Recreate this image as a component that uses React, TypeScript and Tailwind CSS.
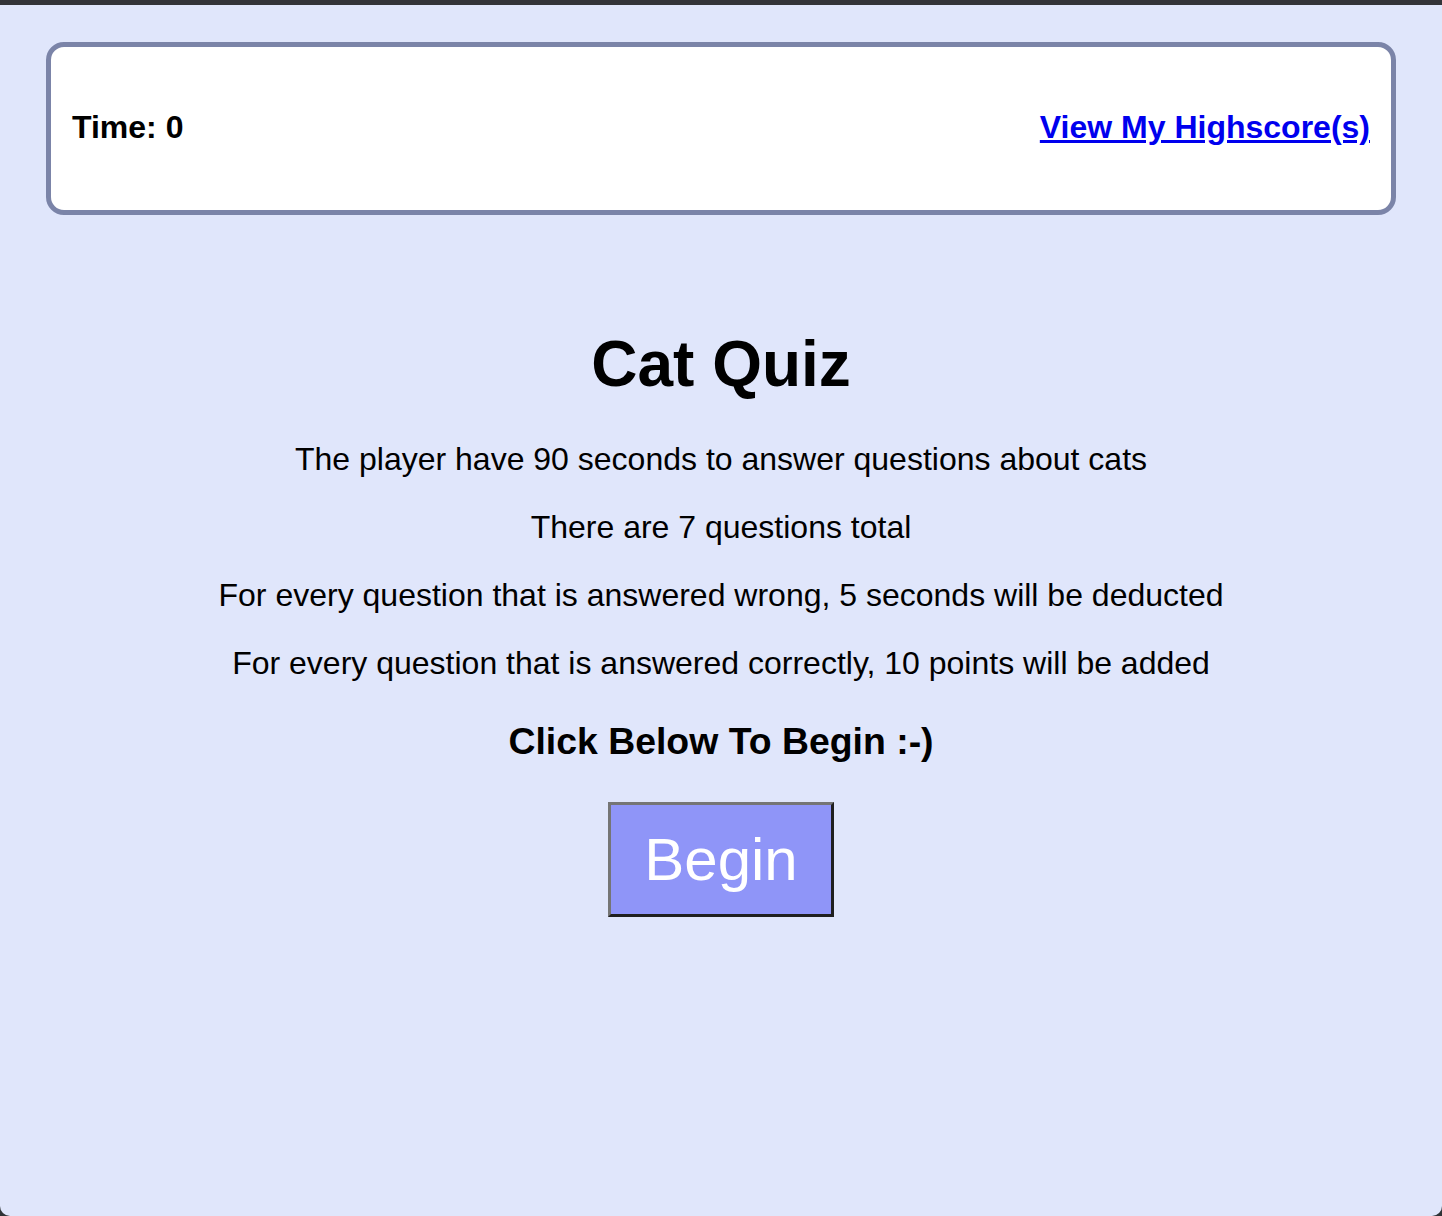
import React from 'react';

const rules = [
  'The player have 90 seconds to answer questions about cats',
  'There are 7 questions total',
  'For every question that is answered wrong, 5 seconds will be deducted',
  'For every question that is answered correctly, 10 points will be added',
];

export default function App() {
  return (
    <div className="h-[1216px] bg-[#2f3336] font-['Liberation_Sans',Arial,sans-serif] text-black">
      <div className="flex h-full flex-col border-t-[5px] border-[#333438] bg-[#e0e6fb] rounded-b-[10px]">
        <header className="mx-[46px] mt-[37px] flex h-[173px] items-center justify-between rounded-[18px] border-[5px] border-[#7b84a8] bg-white px-[21px] pb-[2px]">
          <span className="text-[32px] font-bold leading-[37px]">Time: 0</span>
          <a href="#" className="text-[32px] font-bold leading-[37px] text-[#0000ee] underline">
            View My Highscore(s)
          </a>
        </header>

        <main className="flex flex-col items-center text-center">
          <h1 className="mt-[112px] text-[64px] font-bold leading-[74px]">Cat Quiz</h1>
          <div className="mt-[40px] flex flex-col gap-[32px]">
            {rules.map((r) => (
              <p key={r} className="text-[32px] leading-[36px]">
                {r}
              </p>
            ))}
          </div>
          <h3 className="mt-[39px] text-[37.4px] font-bold leading-[43px]">Click Below To Begin :-)</h3>
          <button className="mt-[39px] border-[3px] border-t-[#757575] border-l-[#757575] border-r-[#1f1f1f] border-b-[#1f1f1f] bg-[#8f95f8] px-[33px] py-[20px] text-[60px] leading-[69px] text-white">
            Begin
          </button>
        </main>
      </div>
    </div>
  );
}
